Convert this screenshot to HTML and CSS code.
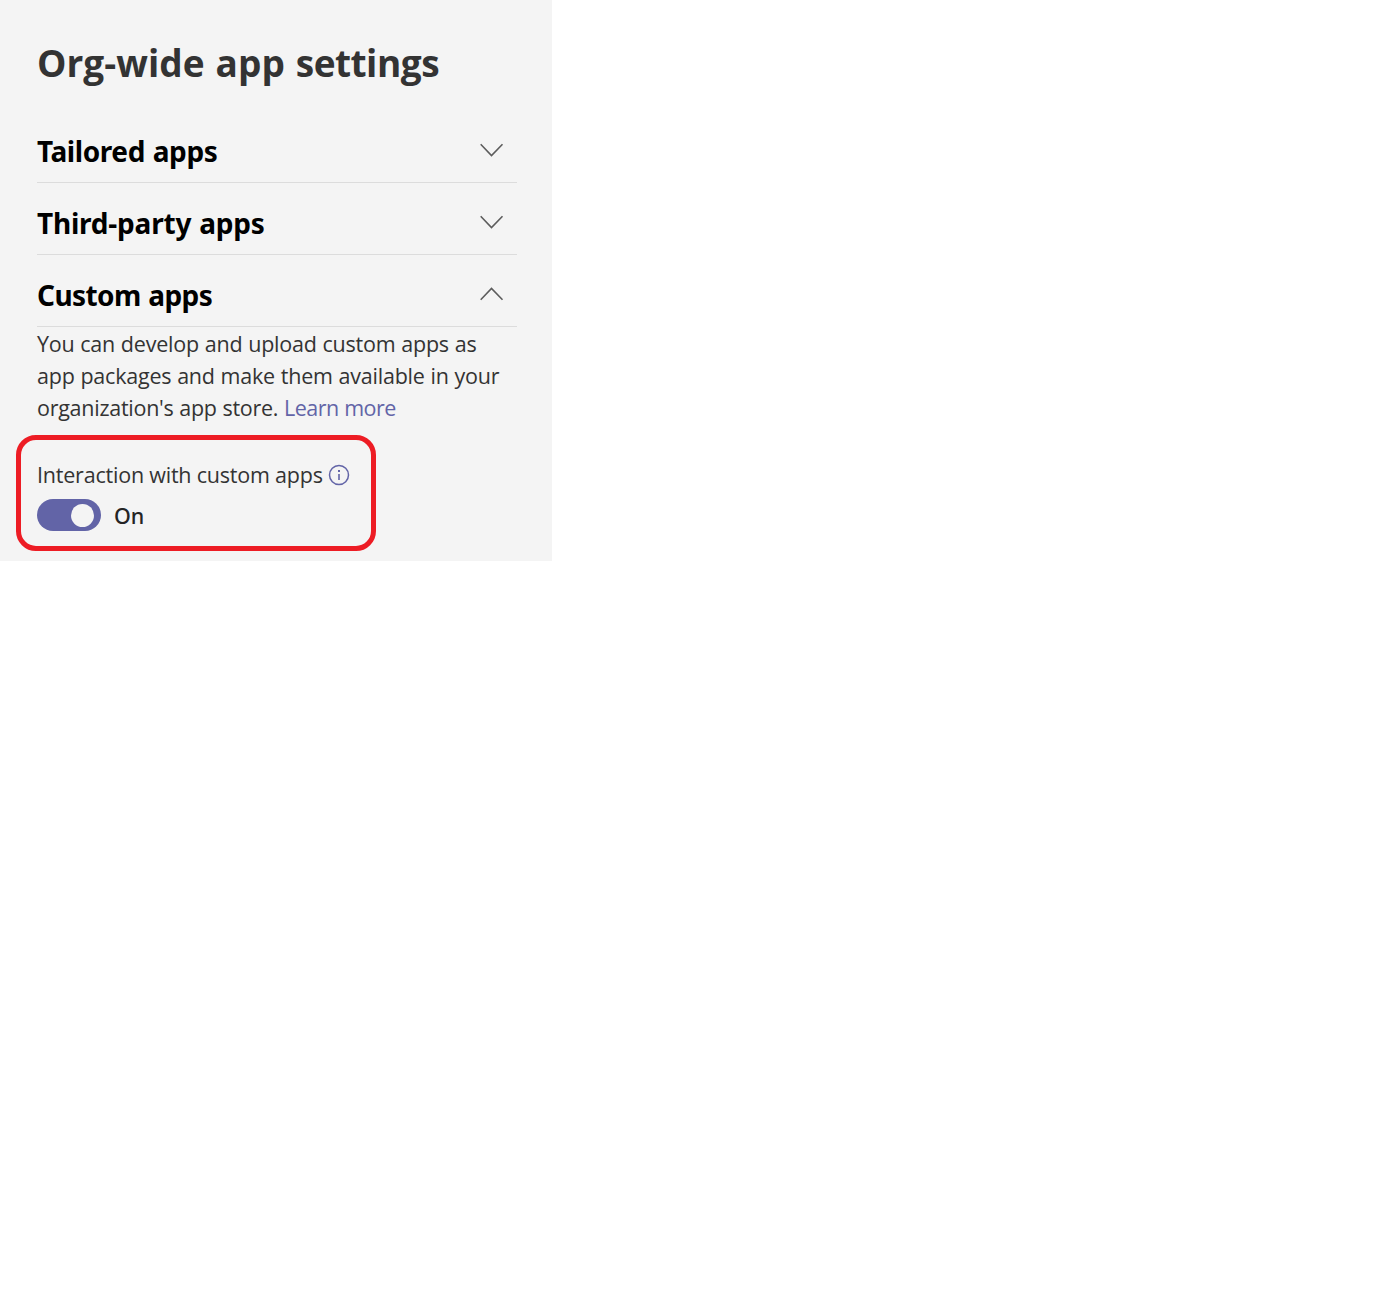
FILE: index.html
```html
<!DOCTYPE html>
<html lang="en">
<head>
<meta charset="utf-8">
<title>Org-wide app settings</title>
<link rel="stylesheet" href="styles.css">
</head>
<body>
<main class="panel">
  <h1 class="title">Org-wide app <span class="title-end">settings</span></h1>
  <section class="section">
    <h2 class="heading tailored">Tailored apps</h2>
    <svg class="chevron" viewBox="0 0 24 14"><path d="M0.7 1.2 11.5 12.5 22.5 1.2"/></svg>
  </section>
  <section class="section">
    <h2 class="heading third-party">Third-party apps</h2>
    <svg class="chevron" viewBox="0 0 24 14"><path d="M0.7 1.2 11.5 12.5 22.5 1.2"/></svg>
  </section>
  <section class="section">
    <h2 class="heading custom">Custom apps</h2>
    <svg class="chevron" viewBox="0 0 24 14"><path d="M0.7 12.8 11.5 1.5 22.5 12.8"/></svg>
  </section>
  <p class="description">
    You can develop and upload custom apps as<br>
    app packages and make them available in your<br>
    <span class="last-line">organization's app store.</span> <a class="link">Learn more</a>
  </p>
  <section class="callout">
    <div class="label">
      <span class="label-text">Interaction with custom apps</span>
      <svg class="info" viewBox="0 0 22 22"><circle cx="11" cy="11" r="9.5"/><path d="M10 6h2v2h-2zM10.2 10h1.6v6h-1.6z"/></svg>
    </div>
    <div class="switch-row">
      <span class="switch"><span class="knob"></span></span>
      <span class="state">On</span>
    </div>
  </section>
</main>
</body>
</html>
```
FILE: styles.css
```css
* { box-sizing: border-box; }
body { margin: 0; background: #fff; font-family: "Open Sans", "Noto Sans", sans-serif; }
.panel { width: 552px; height: 561px; padding: 38px 35px 0 37px; background: #f4f4f4; color: #333; }
.title { margin: 0; height: 73px; font-size: 37px; line-height: 50px; font-weight: 700; letter-spacing: 0.05px; word-spacing: 1.2px; white-space: nowrap; }
.title-end { letter-spacing: -0.5px; }
.section { display: flex; align-items: center; justify-content: space-between; height: 72px; padding: 10px 13px 0 0; border-bottom: 1px solid #dcdcdc; }
.heading { margin: 0; padding-bottom: 2px; font-family: "Noto Sans", "Open Sans", sans-serif; font-size: 28px; line-height: 38px; font-weight: 700; color: #000; word-spacing: 1px; white-space: nowrap; }
.tailored { letter-spacing: -0.42px; }
.third-party { letter-spacing: -0.21px; }
.custom { letter-spacing: -0.6px; }
.chevron { width: 24px; height: 14px; margin-top: -4px; fill: none; stroke: #5c5c5c; stroke-width: 1.6; }
.description { margin: 1px 0 0; font-size: 21.5px; line-height: 32px; letter-spacing: -0.21px; word-spacing: 0.4px; white-space: nowrap; }
.last-line { letter-spacing: -0.26px; }
.link { color: #6264a7; letter-spacing: -0.5px; }
.callout { width: 360px; height: 116px; margin: 11px 0 0 -21px; padding: 19px 0 0 16px; border: 5px solid #ed1c24; border-radius: 20px; }
.label { display: flex; align-items: center; gap: 5px; height: 32px; font-size: 21.5px; line-height: 32px; letter-spacing: -0.21px; white-space: nowrap; }
.info { flex: none; width: 22px; height: 22px; fill: #6264a7; }
.info circle { fill: none; stroke: #6264a7; stroke-width: 1.5; }
.switch-row { display: flex; align-items: center; gap: 13px; height: 32px; margin-top: 8px; }
.switch { display: flex; align-items: center; justify-content: flex-end; width: 64px; height: 32px; padding-right: 7px; border-radius: 16px; background: #6264a7; }
.knob { width: 23px; height: 23px; border-radius: 50%; background: #f4f4f4; }
.state { padding-top: 2px; font-family: "Noto Sans", "Open Sans", sans-serif; font-size: 21.5px; line-height: 32px; font-weight: 500; color: #252424; }
```
